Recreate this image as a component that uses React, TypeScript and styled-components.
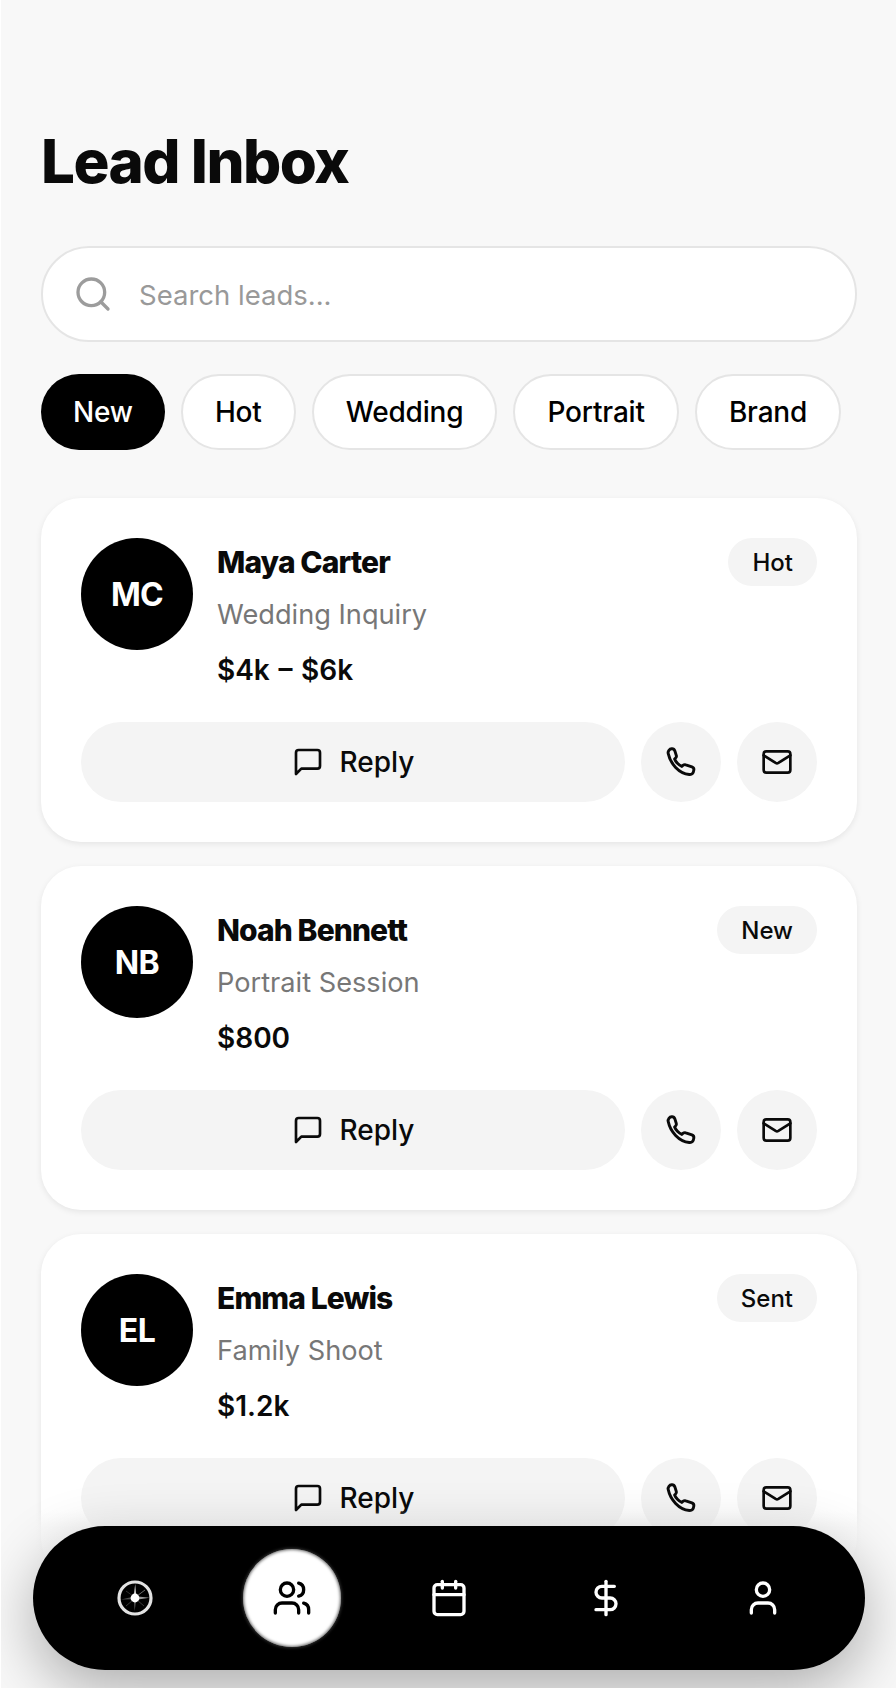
import styled, { createGlobalStyle } from "styled-components";
import { Calendar, DollarSign, Mail, Search, User, Users } from "lucide-react";

const leads = [
  { initials: "MC", name: "Maya Carter", kind: "Wedding Inquiry", budget: "$4k – $6k", status: "Hot" },
  { initials: "NB", name: "Noah Bennett", kind: "Portrait Session", budget: "$800", status: "New" },
  { initials: "EL", name: "Emma Lewis", kind: "Family Shoot", budget: "$1.2k", status: "Sent" },
];

const filters = ["New", "Hot", "Wedding", "Portrait", "Brand"];

const BubbleIcon = () => (
  <svg width="32" height="32" viewBox="0 0 24 24" fill="none" stroke="currentColor" strokeWidth="2" strokeLinecap="round" strokeLinejoin="round">
    <path d="M21 15a2 2 0 0 1-2 2H7l-4 4V5a2 2 0 0 1 2-2h14a2 2 0 0 1 2 2z" />
  </svg>
);

const PhoneIcon = () => (
  <svg width="32" height="32" viewBox="0 0 24 24" fill="none" stroke="currentColor" strokeWidth="2.2" strokeLinejoin="round">
    <path d="M2.4 5.6C2 3.9 3.4 2.2 5 2.1C6.2 2 7 2.6 7.4 3.7L8.5 7.2C8.8 8.1 8.3 8.7 7.8 9.2L7.2 9.8C7.9 11.8 10.4 14.5 12.6 15.3L13.4 14.6C14.1 14 14.8 13.8 15.6 14.1L20.2 15.6C21.3 16 21.8 16.9 21.6 18.1C21.3 20.2 20 21.6 18.2 21.4C10.4 20.6 4 13.2 2.4 5.6Z" />
  </svg>
);

const CompassIcon = () => (
  <svg width="40" height="40" viewBox="-20 -20 40 40">
    <polygon points="-1.2,-3 0.2,-14 1.2,-3" fill="#d0d0d0" />
    <polygon points="3,-1.4 14.5,-0.2 3,1.4" fill="#9a9a9a" />
    <polygon points="-1,3 -0.4,13 1,3" fill="#5c5c5c" />
    <polygon points="-3,-1 -14,1.4 -3,1.2" fill="#505050" />
    <line x1="2" y1="-2" x2="10" y2="-8" stroke="#8c8c8c" strokeWidth="0.8" />
    <line x1="2" y1="2" x2="9" y2="8" stroke="#484848" strokeWidth="0.8" />
    <line x1="-2" y1="2" x2="-9" y2="8" stroke="#484848" strokeWidth="0.8" />
    <line x1="-2" y1="-2" x2="-9" y2="-7" stroke="#3c3c3c" strokeWidth="0.8" />
    <circle r="16" fill="none" stroke="#e2e2e2" strokeWidth="3.2" />
    <circle r="4.4" fill="#fff" />
  </svg>
);

const App = () => {
  return (
    <Shell>
      <GlobalStyle />
      <Title>Lead Inbox</Title>
      <SearchBox>
        <Search size={40} color="#9c9c9c" />
        <SearchInput placeholder="Search leads..." />
      </SearchBox>
      <Filters>
        {filters.map((filter, i) => (
          <Chip key={filter} $active={i === 0}>
            {filter}
          </Chip>
        ))}
      </Filters>
      <List>
        {leads.map((lead) => (
          <Card key={lead.name}>
            <Top>
              <Avatar>{lead.initials}</Avatar>
              <Info>
                <Heading>
                  <Name>{lead.name}</Name>
                  <Badge>{lead.status}</Badge>
                </Heading>
                <Kind>{lead.kind}</Kind>
                <Budget>{lead.budget}</Budget>
              </Info>
            </Top>
            <Actions>
              <ReplyButton>
                <BubbleIcon />
                Reply
              </ReplyButton>
              <RoundButton>
                <PhoneIcon />
              </RoundButton>
              <RoundButton>
                <Mail size={32} />
              </RoundButton>
            </Actions>
          </Card>
        ))}
      </List>
      <Fade />
      <Nav>
        <NavItem>
          <CompassIcon />
        </NavItem>
        <NavItem $active>
          <Users size={40} />
        </NavItem>
        <NavItem>
          <Calendar size={40} />
        </NavItem>
        <NavItem>
          <DollarSign size={40} />
        </NavItem>
        <NavItem>
          <User size={40} />
        </NavItem>
      </Nav>
    </Shell>
  );
};

export default App;

const GlobalStyle = createGlobalStyle`
  html, body {
    margin: 0;
    padding: 0;
    background: #fff;
  }
  * {
    box-sizing: border-box;
  }
`;

const Shell = styled.div`
  position: relative;
  height: 100vh;
  margin-left: 1px;
  padding: 124px 39px 0 40px;
  overflow: hidden;
  background: #f8f8f8;
  font-family: Inter, "Liberation Sans", sans-serif;
  color: #0a0a0a;
`;
const Title = styled.h1`
  margin: 0;
  font-size: 60px;
  line-height: 74px;
  font-weight: 800;
  letter-spacing: -0.025em;
`;
const SearchBox = styled.div`
  margin-top: 48px;
  height: 96px;
  display: flex;
  align-items: center;
  gap: 26px;
  padding: 0 30px;
  background: #fff;
  border: 2px solid #e5e5e5;
  border-radius: 48px;
`;
const SearchInput = styled.input`
  flex: 1;
  padding: 2px 0 0;
  border: none;
  outline: none;
  background: transparent;
  font-family: inherit;
  font-size: 27.5px;
  color: #0a0a0a;
  &::placeholder {
    color: #999;
    opacity: 1;
  }
`;
const Filters = styled.div`
  margin-top: 32px;
  display: flex;
  gap: 16px;
`;
const Chip = styled.div<{ $active?: boolean }>`
  height: 76px;
  display: flex;
  align-items: center;
  padding: 0 32px;
  border-radius: 38px;
  border: ${(p) => (p.$active ? "none" : "2px solid #e5e5e5")};
  background: ${(p) => (p.$active ? "#000" : "#fff")};
  color: ${(p) => (p.$active ? "#fff" : "#000")};
  font-size: 28px;
  font-weight: 500;
  letter-spacing: -0.006em;
`;
const List = styled.div`
  margin-top: 48px;
  display: flex;
  flex-direction: column;
  gap: 24px;
`;
const Card = styled.div`
  padding: 40px;
  background: #fff;
  border-radius: 40px;
  box-shadow: 0 2px 6px rgba(0, 0, 0, 0.08);
`;
const Top = styled.div`
  display: flex;
  gap: 24px;
`;
const Avatar = styled.div`
  width: 112px;
  height: 112px;
  flex-shrink: 0;
  display: flex;
  align-items: center;
  justify-content: center;
  border-radius: 50%;
  background: #000;
  color: #fff;
  font-size: 32px;
  font-weight: 700;
  letter-spacing: -0.02em;
`;
const Info = styled.div`
  flex: 1;
  display: flex;
  flex-direction: column;
`;
const Heading = styled.div`
  height: 48px;
  display: flex;
  align-items: center;
  justify-content: space-between;
`;
const Name = styled.div`
  font-size: 30px;
  font-weight: 800;
  letter-spacing: -0.03em;
`;
const Badge = styled.div`
  height: 48px;
  display: flex;
  align-items: center;
  padding: 0 24px;
  border-radius: 24px;
  background: #f4f4f4;
  font-size: 24px;
  font-weight: 500;
`;
const Kind = styled.div`
  margin-top: 12px;
  font-size: 27.2px;
  line-height: 34px;
  color: #777;
`;
const Budget = styled.div`
  margin-top: 21px;
  font-size: 28px;
  line-height: 34px;
  font-weight: 600;
  word-spacing: 1.6px;
`;
const Actions = styled.div`
  margin-top: 35px;
  display: flex;
  gap: 16px;
`;
const ReplyButton = styled.div`
  flex: 1;
  height: 80px;
  display: flex;
  align-items: center;
  justify-content: center;
  gap: 16px;
  border-radius: 40px;
  background: #f4f4f4;
  font-size: 28px;
  font-weight: 500;
`;
const RoundButton = styled.div`
  width: 80px;
  height: 80px;
  display: flex;
  align-items: center;
  justify-content: center;
  border-radius: 50%;
  background: #f4f4f4;
`;
const Fade = styled.div`
  position: absolute;
  left: 0;
  right: 0;
  bottom: 0;
  height: 200px;
  background: linear-gradient(
    to bottom,
    rgba(248, 248, 248, 0) 11%,
    rgba(248, 248, 248, 0.7) 20%,
    #f8f8f8 45%
  );
`;
const Nav = styled.nav`
  position: absolute;
  left: 32px;
  right: 31px;
  bottom: 18px;
  height: 144px;
  display: flex;
  align-items: center;
  justify-content: space-between;
  padding: 0 53px;
  border-radius: 72px;
  background: #000;
  color: #fff;
  box-shadow: 0 20px 60px rgba(0, 0, 0, 0.3);
`;
const NavItem = styled.div<{ $active?: boolean }>`
  width: 98px;
  height: 98px;
  display: flex;
  align-items: center;
  justify-content: center;
  border-radius: 50%;
  ${(p) =>
    p.$active &&
    `
    background: #fff;
    color: #000;
    box-shadow: inset 0 0 3px 1px rgba(0, 0, 0, 0.55), 0 0 3px 1px rgba(255, 255, 255, 0.2);
  `}
`;
